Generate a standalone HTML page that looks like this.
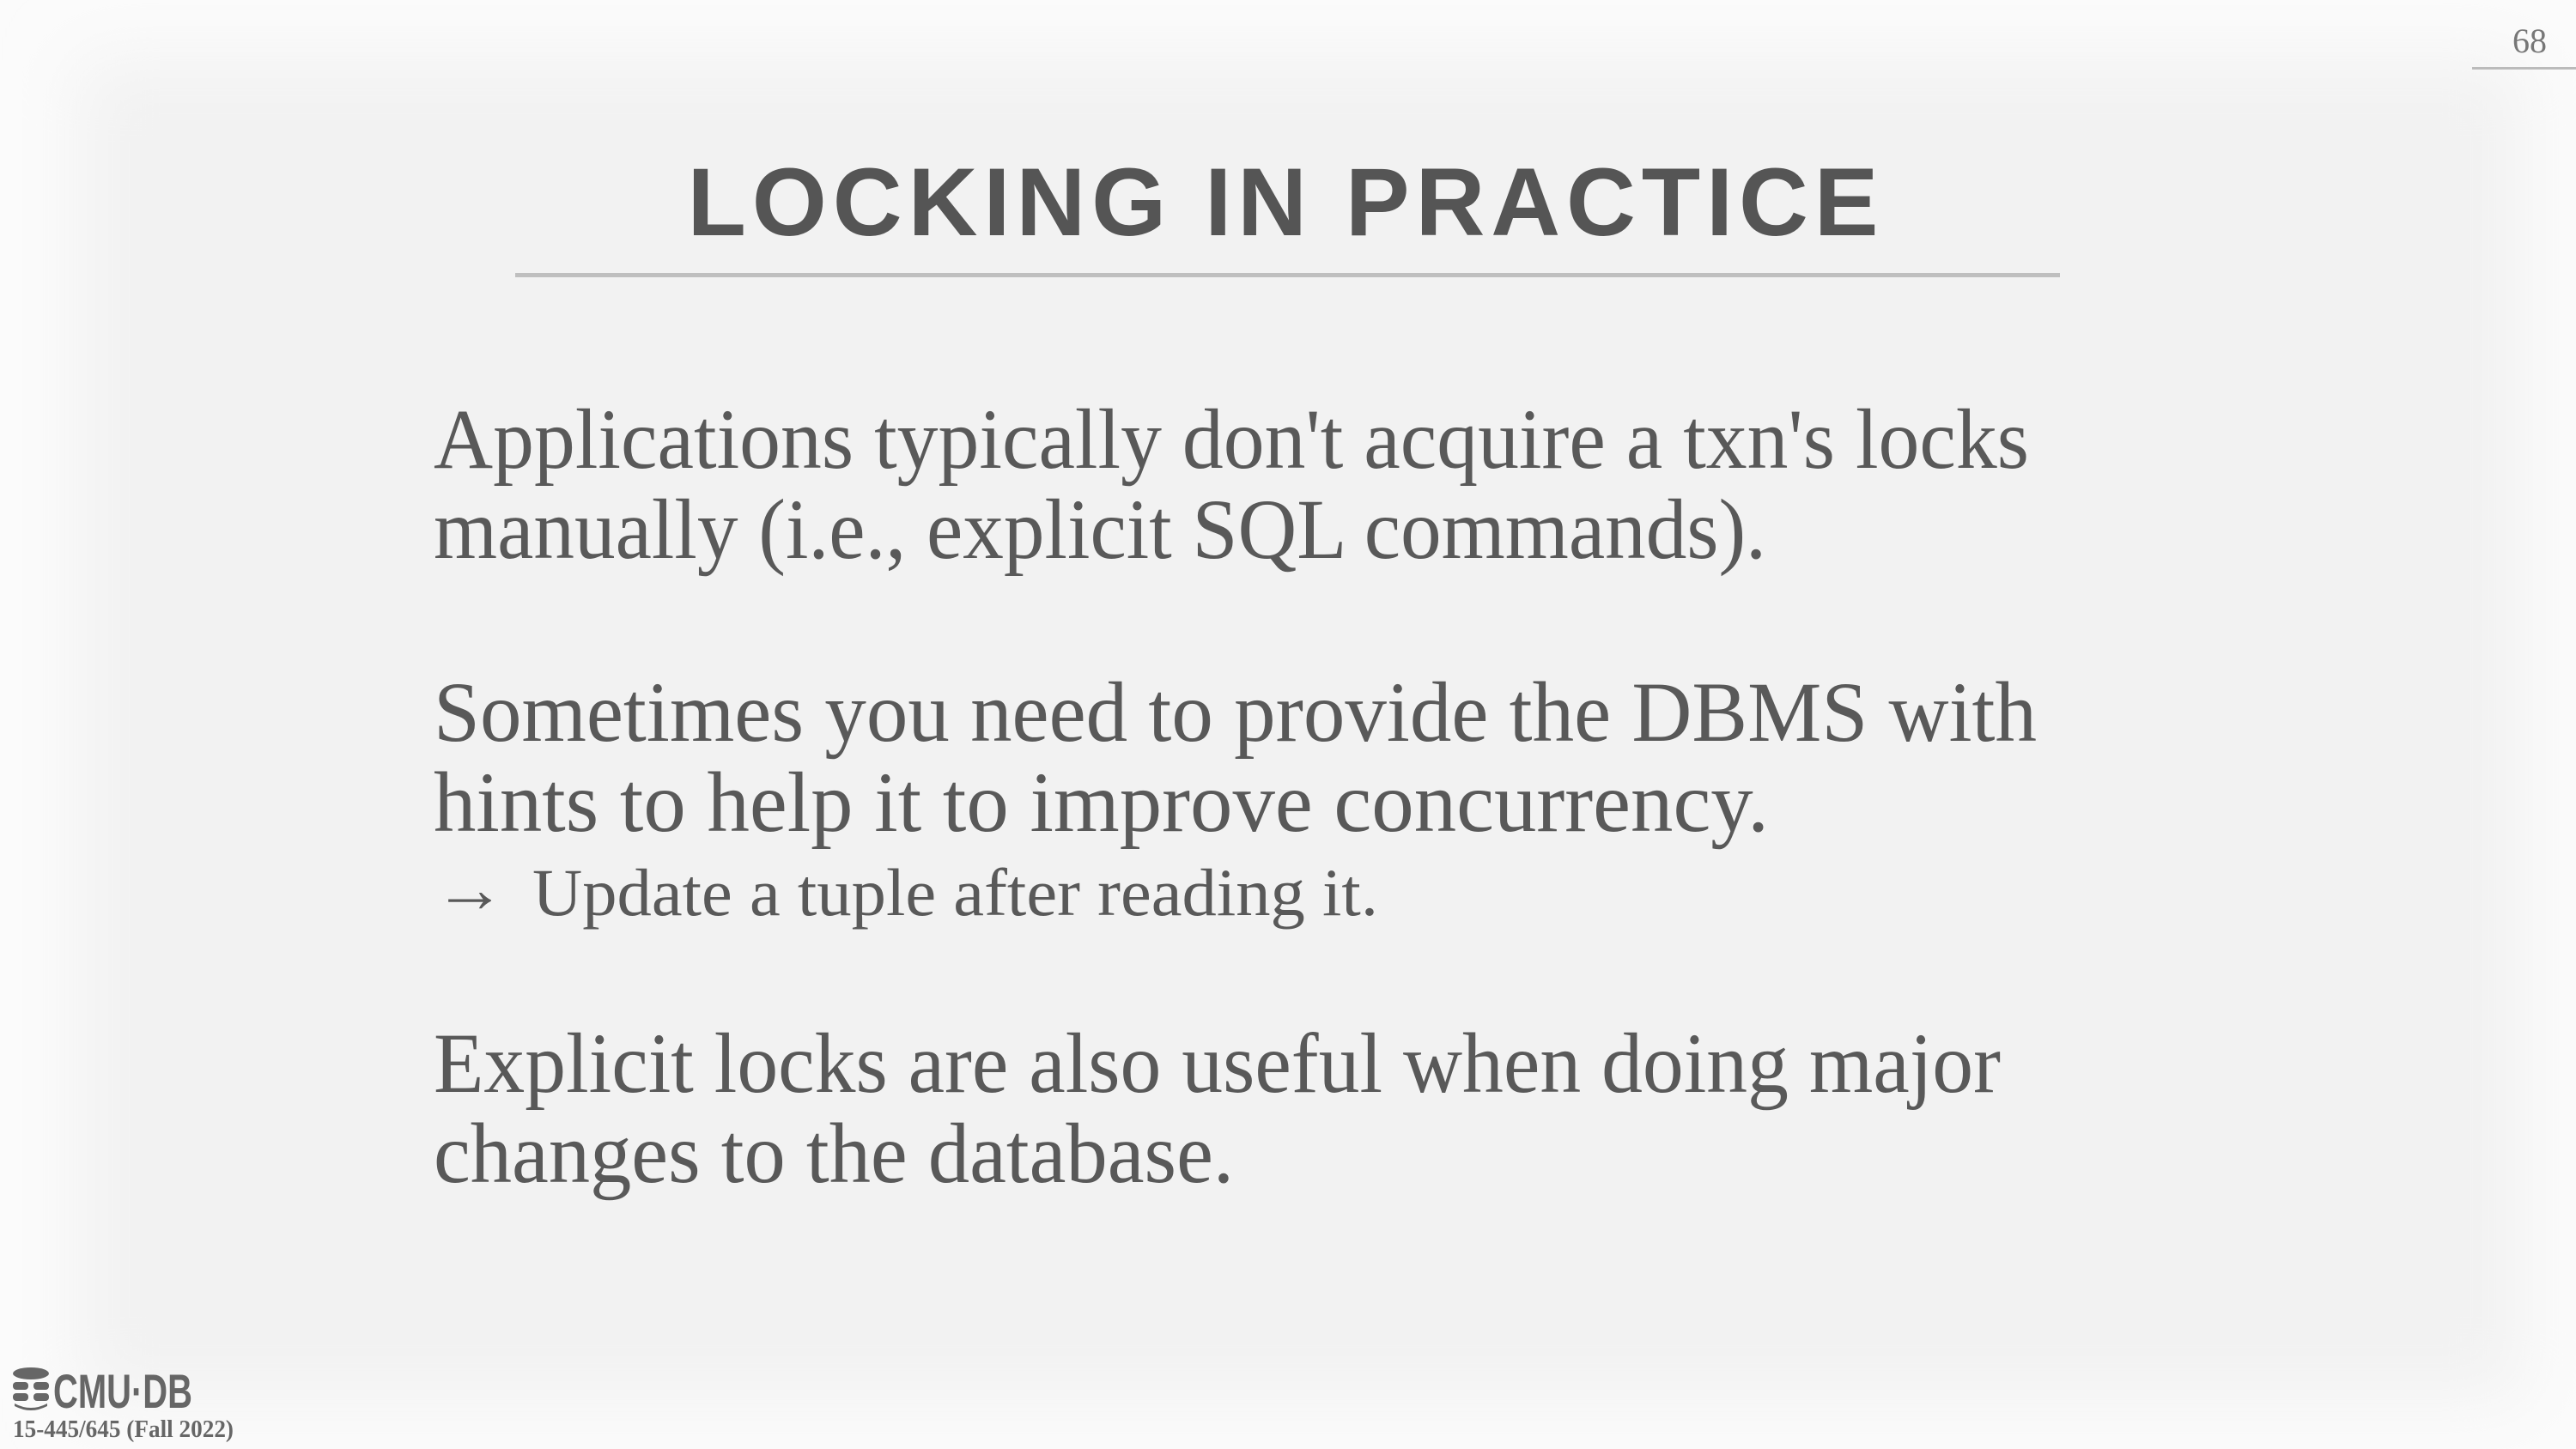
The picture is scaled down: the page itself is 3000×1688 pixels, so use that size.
<!DOCTYPE html>
<html><head><meta charset="utf-8"><style>html,body{margin:0;padding:0;background:#f2f2f2}svg{display:block}</style></head>
<body>
<svg width="3000" height="1688" viewBox="0 0 3000 1688" xmlns="http://www.w3.org/2000/svg">
<defs>
<filter id="b" x="-10%" y="-10%" width="120%" height="120%"><feGaussianBlur stdDeviation="40"/></filter>
</defs>
<rect width="3000" height="1688" fill="#fbfbfb"/>
<rect x="90" y="70" width="2850" height="1560" fill="#f2f2f2" filter="url(#b)"/>
<text x="1494" y="274" text-anchor="middle" font-family="Liberation Sans, sans-serif" font-weight="bold" font-size="112" fill="#555" textLength="1387" lengthAdjust="spacing">LOCKING IN PRACTICE</text>
<rect x="600" y="318" width="1799" height="5" fill="#bfbfbf"/>
<g font-family="Liberation Serif, serif" fill="#595959" font-size="100">
<text x="505" y="545" textLength="1858" lengthAdjust="spacingAndGlyphs">Applications typically don't acquire a txn's locks</text>
<text x="505" y="650" textLength="1552" lengthAdjust="spacingAndGlyphs">manually (i.e., explicit SQL commands).</text>
<text x="505" y="863" textLength="1867" lengthAdjust="spacingAndGlyphs">Sometimes you need to provide the DBMS with</text>
<text x="505" y="968" textLength="1555" lengthAdjust="spacingAndGlyphs">hints to help it to improve concurrency.</text>
<text x="505" y="1062" font-size="78" textLength="84" lengthAdjust="spacingAndGlyphs">→</text>
<text x="620" y="1066" font-size="78" textLength="985" lengthAdjust="spacingAndGlyphs">Update a tuple after reading it.</text>
<text x="505" y="1272" textLength="1825" lengthAdjust="spacingAndGlyphs">Explicit locks are also useful when doing major</text>
<text x="505" y="1377" textLength="932" lengthAdjust="spacingAndGlyphs">changes to the database.</text>
</g>
<text x="2946" y="61" text-anchor="middle" font-family="Liberation Serif, serif" font-size="40" fill="#777">68</text>
<rect x="2879" y="78" width="121" height="3" fill="#bbb"/>
<g fill="#666">
<ellipse cx="36" cy="1600" rx="21" ry="7"/>
<rect x="15" y="1610" width="18" height="9" rx="4"/><rect x="39" y="1610" width="18" height="9" rx="4"/>
<rect x="15" y="1623" width="18" height="9" rx="4"/><rect x="39" y="1623" width="18" height="9" rx="4"/>
<path d="M17 1635 Q36 1645 55 1635 L55 1638 Q36 1648 17 1638Z"/>
</g>
<text x="62" y="1640" font-family="Liberation Sans, sans-serif" font-weight="bold" font-size="56" fill="#666" textLength="162" lengthAdjust="spacingAndGlyphs">CMU·DB</text>
<text x="15" y="1674" font-family="Liberation Serif, serif" font-weight="bold" font-size="28" fill="#666" textLength="257" lengthAdjust="spacingAndGlyphs">15-445/645 (Fall 2022)</text>
</svg>
</body></html>
